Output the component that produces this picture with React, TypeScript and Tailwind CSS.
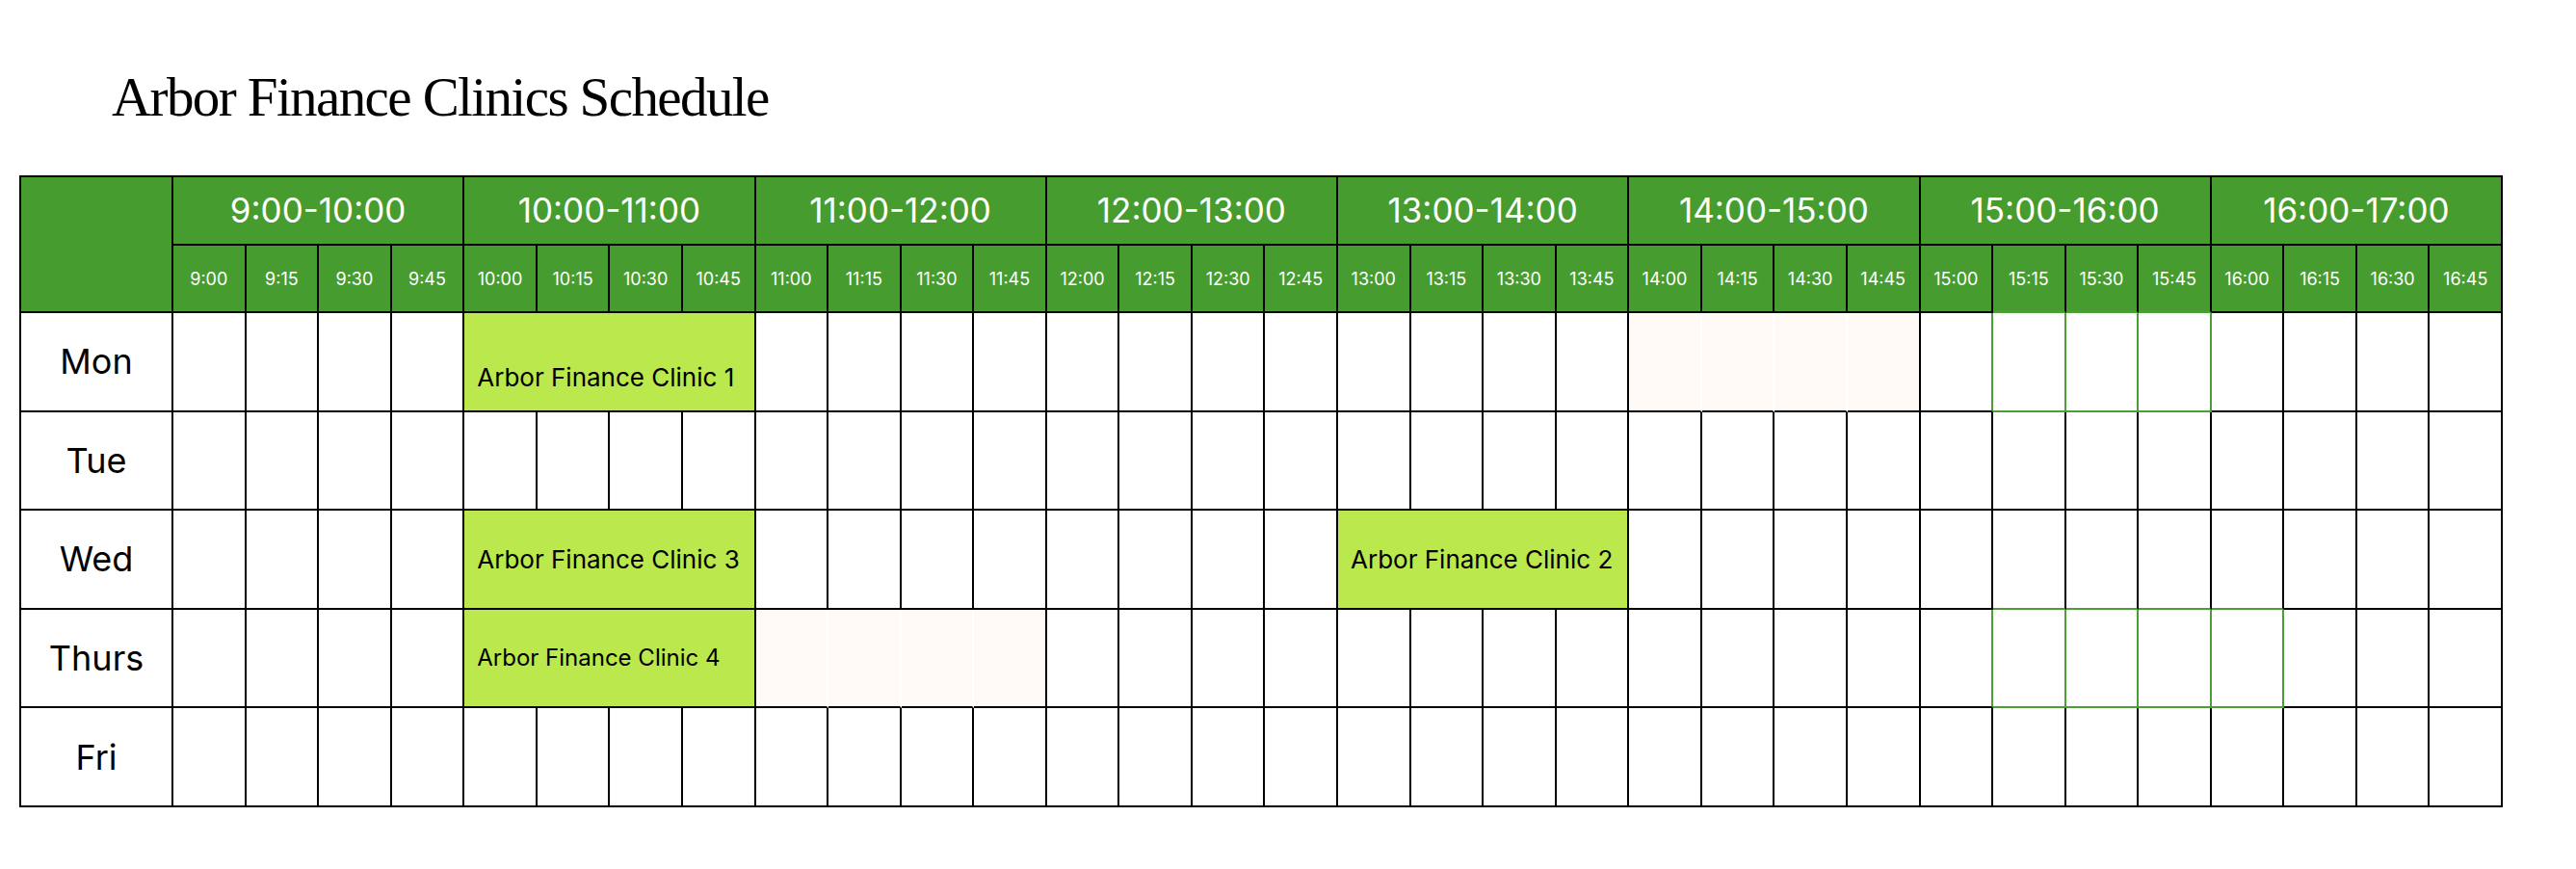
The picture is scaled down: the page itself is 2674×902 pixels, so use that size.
const DAYS = ['Mon', 'Tue', 'Wed', 'Thurs', 'Fri'];
const HOURS = [9, 10, 11, 12, 13, 14, 15, 16];
const SLOTS = HOURS.flatMap((h) => ['00', '15', '30', '45'].map((m) => `${h}:${m}`));

type Clinic = {
  day: number;
  start: number;
  label: string;
  small?: boolean;
  low?: boolean;
};

const CLINICS: Clinic[] = [
  { day: 0, start: 4, label: 'Arbor Finance Clinic 1', low: true },
  { day: 2, start: 4, label: 'Arbor Finance Clinic 3' },
  { day: 2, start: 16, label: 'Arbor Finance Clinic 2' },
  { day: 3, start: 4, label: 'Arbor Finance Clinic 4', small: true },
];

// outlined (green) and tinted (cream) slots, per day
const OUTLINED: Record<number, number[]> = { 0: [25, 26, 27], 3: [25, 26, 27, 28] };
const TINTED: Record<number, number[]> = { 0: [20, 21, 22, 23], 3: [8, 9, 10, 11] };

const isOutlined = (d: number, s: number) => (OUTLINED[d] ?? []).includes(s);
const isTinted = (d: number, s: number) => (TINTED[d] ?? []).includes(s);

function SlotCell({ day, slot }: { day: number; slot: number }) {
  const greenRight = isOutlined(day, slot) || isOutlined(day, slot + 1);
  const whiteRight = !greenRight && isTinted(day, slot) && isTinted(day, slot + 1);
  const greenBottom = isOutlined(day, slot) || isOutlined(day + 1, slot);

  return (
    <div
      className={[
        'border-r-2 border-b-2',
        greenRight ? 'border-r-[#4c9f36]' : whiteRight ? 'border-r-white' : 'border-r-black',
        greenBottom ? 'border-b-[#4c9f36]' : 'border-b-black',
        isTinted(day, slot) ? 'bg-[#fffaf5]' : 'bg-white',
      ].join(' ')}
    />
  );
}

function DayRow({ day }: { day: number }) {
  const cells = [];
  let s = 0;
  while (s < SLOTS.length) {
    const clinic = CLINICS.find((c) => c.day === day && c.start === s);
    if (clinic) {
      cells.push(
        <div
          key={s}
          className={`col-span-4 flex items-center border-r-2 border-b-2 border-black bg-[#bbe84c] px-[13px] text-black ${
            clinic.small ? 'text-[24px]' : 'text-[26px]'
          } ${clinic.low ? 'pt-[32px]' : ''}`}
        >
          {clinic.label}
        </div>
      );
      s += 4;
    } else {
      cells.push(<SlotCell key={s} day={day} slot={s} />);
      s += 1;
    }
  }

  return (
    <>
      <div className="flex items-center justify-center border-r-2 border-b-2 border-black bg-white text-[36px] text-black">
        {DAYS[day]}
      </div>
      {cells}
    </>
  );
}

export default function App() {
  return (
    <div className="min-h-screen bg-white px-[20px] pt-[72px] font-[Inter,'Liberation_Sans',sans-serif]">
      <h1 className="ml-[96px] font-['Liberation_Serif','DejaVu_Serif',serif] text-[57px] leading-none tracking-[-1.6px] text-black">
        Arbor Finance Clinics Schedule
      </h1>

      <div className="mt-[53px] grid w-[2578px] grid-cols-[158px_repeat(32,minmax(0,1fr))] grid-rows-[71px_70px_repeat(5,102.6px)] border-l-2 border-t-2 border-black">
        {/* corner */}
        <div className="row-span-2 border-r-2 border-b-2 border-black bg-[#479c30]" />

        {/* hour headers */}
        {HOURS.map((h) => (
          <div
            key={h}
            className="col-span-4 flex items-center justify-center border-r-2 border-b-2 border-black bg-[#479c30] text-[35px] text-white"
          >
            {h}:00-{h + 1}:00
          </div>
        ))}

        {/* quarter headers */}
        {SLOTS.map((t, i) => (
          <div
            key={t}
            className={`flex items-center justify-center border-r-2 border-b-2 border-r-black bg-[#479c30] text-[18px] text-white ${
              isOutlined(0, i) ? 'border-b-[#4c9f36]' : 'border-b-black'
            }`}
          >
            {t}
          </div>
        ))}

        {DAYS.map((_, d) => (
          <DayRow key={d} day={d} />
        ))}
      </div>
    </div>
  );
}
